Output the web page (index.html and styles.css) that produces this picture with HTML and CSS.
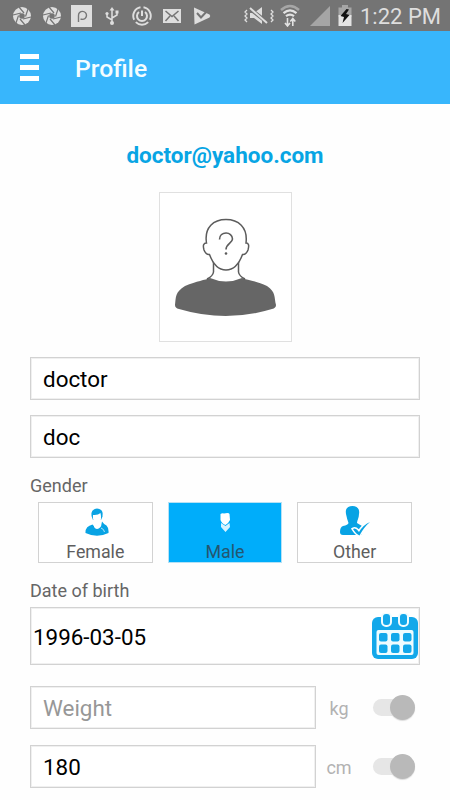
FILE: index.html
```html
<!DOCTYPE html>
<html lang="en">
<head>
    <meta charset="UTF-8">
    <meta name="viewport" content="width=device-width, initial-scale=1.0">
    <title>Profile</title>
    <link rel="stylesheet" href="styles.css">
</head>
<body>

    <div class="status-bar">
        <div class="status-left">
            <svg width="20" height="20" viewBox="0 0 20 20">
                <circle cx="10" cy="10" r="9" fill="#dedede"/>
                <path d="M7 1l5 6M16 3l-2.500 7.500M19 11l-8 2M13 19l-5-6M4 17l2.500-7.500M1 9l8-2" stroke="#747474" stroke-width="1.200"/>
                <circle cx="10" cy="10" r="2.800" fill="#747474"/>
            </svg>
            <svg width="20" height="20" viewBox="0 0 20 20">
                <circle cx="10" cy="10" r="9" fill="#dedede"/>
                <path d="M7 1l5 6M16 3l-2.500 7.500M19 11l-8 2M13 19l-5-6M4 17l2.500-7.500M1 9l8-2" stroke="#747474" stroke-width="1.200"/>
                <circle cx="10" cy="10" r="2.800" fill="#747474"/>
            </svg>
            <svg class="p-icon" width="21" height="22" viewBox="0 0 21 22">
                <rect width="21" height="22" fill="#dedede"/>
                <path d="M7.500 17V10.500A4 4 0 1 1 11 14.300H9.500" fill="none" stroke="#777" stroke-width="1.400"/>
            </svg>
            <svg width="20" height="20" viewBox="0 0 20 20">
                <path d="M10 3v14M10 14L5 11V8M10 12l5-3V6" fill="none" stroke="#dedede" stroke-width="1.500"/>
                <path d="M7.500 4.500L10 1l2.500 3.500z" fill="#dedede"/>
                <circle cx="10" cy="17" r="2" fill="#dedede"/>
                <circle cx="5" cy="7.500" r="1.600" fill="#dedede"/>
                <rect x="13.500" y="4.500" width="3" height="3" fill="#dedede"/>
            </svg>
            <svg width="20" height="20" viewBox="0 0 20 20">
                <path d="M11.500 1.300A8.700 8.700 0 0 1 17.800 13.800M16.200 16.200A8.700 8.700 0 0 1 3.800 16.200M2.200 13.800A8.700 8.700 0 0 1 8.500 1.300" fill="none" stroke="#dedede" stroke-width="1.900"/>
                <path d="M7 6a5 5 0 1 0 6 0M10 4.500V10" fill="none" stroke="#dedede" stroke-width="2"/>
            </svg>
            <svg width="20" height="20" viewBox="0 0 20 20">
                <rect x="1" y="3" width="18" height="14" fill="#dedede"/>
                <path d="M3.500 5l6.500 5.500L16.500 5M3.500 15l4.500-5M16.500 15L12 10" fill="none" stroke="#747474" stroke-width="1.500"/>
            </svg>
            <svg width="20" height="20" viewBox="0 0 20 20">
                <path d="M2 1.500L17.500 8.500Q19 10 17.500 11.500L2.500 18.500z" fill="#dedede"/>
                <path d="M5 7l4 4.500 8-8.500" fill="none" stroke="#747474" stroke-width="2"/>
            </svg>
        </div>
        <div class="status-right">
            <svg width="30" height="20" viewBox="0 0 30 20">
                <path d="M6 7h4l8-6v17l-8-6H6z" fill="#dedede"/>
                <path d="M5 2l19 15" stroke="#747474" stroke-width="4"/>
                <path d="M6 2l17 15" stroke="#dedede" stroke-width="2"/>
                <path d="M3 4L1 6l2 2-2 2 2 2-2 2 2 2M27 4l2 2-2 2 2 2-2 2 2 2-2 2" fill="none" stroke="#dedede" stroke-width="1.300"/>
            </svg>
            <svg class="wifi" width="20" height="23" viewBox="0 0 20 23">
                <path d="M1 6Q10-2 19 6" fill="none" stroke="#a6a6a6" stroke-width="2.400"/>
                <path d="M3.500 9.200Q10 3.500 16.500 9.200M6 12.200Q10 9 14 12.200" fill="none" stroke="#e2e2e2" stroke-width="2.200"/>
                <path d="M7.500 14v7M5 19l2.500 3 2.500-3M12.800 22v-7M10.300 17.500l2.500-3 2.500 3" fill="none" stroke="#e2e2e2" stroke-width="1.600"/>
            </svg>
            <svg class="signal" width="20" height="20" viewBox="0 0 20 20">
                <path d="M20 0v20H0z" fill="#a5a5a5"/>
            </svg>
            <svg class="battery" width="14" height="21" viewBox="0 0 14 21">
                <path d="M4 0h6v2.500h3.500V12H.5V2.500H4z" fill="#a6a6a6"/>
                <path d="M.5 10h13v11H.5z" fill="#e4e4e4"/>
                <path d="M8.500 4L2.500 11l3.500 1-1.500 6L11.500 10 8 9l3-4.500z" fill="#111"/>
            </svg>
            <span class="clock">1:22 PM</span>
        </div>
    </div>

    <header class="toolbar">
        <div class="menu-icon">
            <span></span>
            <span></span>
            <span></span>
        </div>
        <h1>Profile</h1>
    </header>

    <main class="profile">
        <p class="email">doctor@yahoo.com</p>

        <div class="avatar">
            <svg width="131" height="148" viewBox="0 0 131 148">
                <path d="M15 112C16 104 15 99 25 93C37 88 45 87 50 85Q66 92 82 85C87 87 97 88 107 93C116 99 114 104 116 112Q116 115 112 116Q66 130 19 116Q15 115 15 112z" fill="#666"/>
                <path d="M53.500 69V79Q53 83 47 86M78.500 69V79Q79 83 85 86" fill="none" stroke="#5c5c5c" stroke-width="1.500"/>
                <path d="M46.500 50C44 34 54 26.500 66 26.500S88 34 86 50Q90 50 88 57Q86 62 82.500 61.500C79 71 73 77 66 77S53 71 49.500 61.500Q46 62 44 57Q42 50 46.500 50z" fill="#fff" stroke="#5c5c5c" stroke-width="1.500"/>
                <path d="M59.500 46.500C59.500 38 72.500 38 72.500 46C72.500 50 66 50.500 66 56.500" fill="none" stroke="#5c5c5c" stroke-width="1.600"/>
                <circle cx="66" cy="60.500" r="1.300" fill="#5c5c5c"/>
            </svg>
        </div>

        <form class="profile-form">
            <input class="field" type="text" value="doctor">
            <input class="field" type="text" value="doc">

            <p class="label">Gender</p>
            <div class="gender-list">
                <div class="gender">
                    <svg class="female-icon" width="26" height="28" viewBox="0 0 26 28">
                        <path d="M1.500 25Q1 18.500 8.500 16.500L12 20.500l5-2L18 13.500Q20 16.500 22.500 17.500Q25 20 24.500 25Q13 30.500 1.500 25z" fill="#08a3e4"/>
                        <path d="M7.500 8Q6.500 1 13 .5Q20 1 18.500 8.500L17 12H9z" fill="#08a3e4"/>
                        <path d="M9 7Q14 7.500 16.500 5Q18 11.500 15.500 14.500L16.500 19Q13 23 10 19L10.500 14.500Q8.500 12 9 7z" fill="#fff"/>
                        <path d="M17 20q3 1 3.500 4" fill="none" stroke="#d8f3ff" stroke-width=".8"/>
                    </svg>
                    <span>Female</span>
                </div>
                <div class="gender selected">
                    <svg width="26" height="28" viewBox="0 0 26 28">
                        <path d="M8.500 6Q10 5 12 5.500Q17 4.500 17.500 6L18 12Q16 16 13.500 17Q10 16 8.500 12z" fill="#fff"/>
                        <path d="M9 15l4.500 3 4-3 .5 4-4.500 5L9 19z" fill="#d8f3ff"/>
                    </svg>
                    <span>Male</span>
                </div>
                <div class="gender">
                    <svg class="other-icon" width="32" height="32" viewBox="0 0 32 32">
                        <path d="M7 9C6 3 9 1 13.500 1S21 4 20 9C20 13 18 15 18 18L23 21V30H4Q1 30 1 27Q1 22 4 21Q9 20 9.500 18Q8 14 7 9z" fill="#08a3e4"/>
                        <path d="M14 24q3-2 6 3 4-7 11-10-6 5-10.500 13.500Q17 29 14 24z" fill="#08a3e4" stroke="#fff" stroke-width="3" paint-order="stroke"/>
                    </svg>
                    <span>Other</span>
                </div>
            </div>

            <p class="label birth-label">Date of birth</p>
            <div class="date-field">
                <span>1996-03-05</span>
                <svg width="46" height="46" viewBox="0 0 46 46">
                    <rect x="0" y="4" width="46" height="42" rx="6" fill="#13a8ea"/>
                    <rect x="4.500" y="17" width="37" height="25" rx="2" fill="#effcff"/>
                    <g fill="#13a8ea" stroke="#effcff" stroke-width="2">
                        <rect x="10" y="0" width="9" height="13" rx="4"/>
                        <rect x="27" y="0" width="9" height="13" rx="4"/>
                    </g>
                    <g fill="#13a8ea">
                        <rect x="7" y="20" width="8.500" height="8.500" rx="2"/>
                        <rect x="19" y="20" width="8.500" height="8.500" rx="2"/>
                        <rect x="31" y="20" width="8.500" height="8.500" rx="2"/>
                        <rect x="7" y="31.500" width="8.500" height="8.500" rx="2"/>
                        <rect x="19" y="31.500" width="8.500" height="8.500" rx="2"/>
                        <rect x="31" y="31.500" width="8.500" height="8.500" rx="2"/>
                    </g>
                </svg>
            </div>

            <div class="measure">
                <input class="field" type="text" placeholder="Weight">
                <span class="unit">kg</span>
                <div class="switch"><span class="thumb"></span></div>
            </div>
            <div class="measure">
                <input class="field" type="text" value="180">
                <span class="unit">cm</span>
                <div class="switch"><span class="thumb"></span></div>
            </div>
        </form>
    </main>

</body>
</html>
```
FILE: styles.css
```css
* {
    box-sizing: border-box;
}

body {
    margin: 0;
    height: 800px;
    overflow: hidden;
    background: #fefefe;
    font-family: Roboto, "Liberation Sans", sans-serif;
}

svg {
    display: block;
    flex-shrink: 0;
}

.status-bar {
    display: flex;
    justify-content: space-between;
    height: 31px;
    padding: 0 10px 0 12px;
    background: #747474;
}

.status-left,
.status-right {
    display: flex;
    align-items: center;
}

.status-left {
    gap: 10px;
}

.p-icon {
    margin-left: -1px;
}

.wifi {
    margin-left: 6px;
}

.signal {
    margin-left: 10px;
}

.battery {
    margin-left: 8px;
}

.clock {
    width: 80px;
    margin-left: 8px;
    padding-top: 3px;
    color: #dedede;
    font-size: 22px;
    line-height: 28px;
    white-space: nowrap;
}

.toolbar {
    display: flex;
    align-items: center;
    height: 73px;
    padding: 2px 20px 0;
    background: #38b6fc;
}

.menu-icon {
    display: flex;
    flex-direction: column;
    gap: 6px;
    width: 19px;
    margin-top: -2px;
}

.menu-icon span {
    height: 5px;
    background: #fff;
}

.toolbar h1 {
    margin: 0 0 0 36px;
    color: #f4fdff;
    font-size: 24.7px;
    font-weight: 500;
    line-height: 30px;
}

.profile {
    padding: 37px 30px 0;
}

.email {
    margin: 0;
    color: #08a5e4;
    font-size: 22.5px;
    font-weight: bold;
    line-height: 28px;
    text-align: center;
}

.avatar {
    width: 133px;
    height: 150px;
    margin: 23px auto 15px;
    border: 1px solid #e0e0e0;
    background: #fff;
}

.field {
    display: block;
    width: 100%;
    height: 43px;
    margin: 0 0 15px;
    padding: 0 12px;
    border: 1px solid #d2d2d2;
    border-radius: 0;
    background: #fff;
    box-shadow: inset 0 0 0 1px #f0f0f0;
    color: #000;
    font-family: inherit;
    font-size: 22.4px;
}

.field::placeholder {
    color: #979797;
}

.label {
    margin: 0;
    padding-top: 2px;
    color: #666;
    font-size: 18px;
    line-height: 22px;
}

.gender-list {
    display: flex;
    gap: 15px;
    margin: 5px 8px 0;
}

.gender {
    display: flex;
    flex: 1;
    flex-direction: column;
    align-items: center;
    justify-content: flex-end;
    height: 61px;
    border: 1px solid #d2d2d2;
    background: #fff;
    color: #5e5e5e;
    font-size: 17.8px;
    line-height: 20px;
}

.gender svg {
    margin-bottom: 6px;
}

.gender .female-icon {
    margin-left: 4px;
}

.gender .other-icon {
    margin-bottom: 5px;
}

.selected {
    border-color: #b5e1f5;
    background: #00adfa;
    color: #24566f;
}

.birth-label {
    margin-top: 15px;
}

.date-field {
    display: flex;
    align-items: center;
    justify-content: space-between;
    height: 58px;
    margin: 5px 0 21px;
    padding: 0 1px 0 2px;
    border: 1px solid #d2d2d2;
    background: #fff;
    box-shadow: inset 0 0 0 1px #f0f0f0;
    font-size: 22.4px;
}

.date-field span {
    padding-top: 2px;
}

.measure {
    display: flex;
    height: 43px;
    margin-bottom: 16px;
    align-items: center;
}

.measure .field {
    width: 286px;
    margin: 0;
}

.unit {
    width: 46px;
    padding-top: 2px;
    color: #b2b2b2;
    font-size: 18px;
    text-align: center;
}

.switch {
    display: flex;
    align-items: center;
    justify-content: flex-end;
    width: 42px;
    height: 17px;
    margin-left: 11px;
    border-radius: 9px;
    background: #e6e6e6;
}

.thumb {
    width: 25px;
    height: 25px;
    border-radius: 50%;
    background: #b9b9b9;
    box-shadow: 0 1px 1px #ddd;
}
```
